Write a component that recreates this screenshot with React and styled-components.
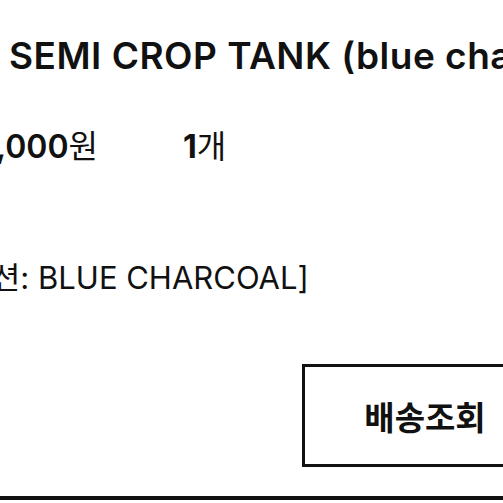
import styled, { createGlobalStyle } from "styled-components";

const GlobalStyle = createGlobalStyle`
  html, body {
    margin: 0;
    padding: 0;
    background: #ffffff;
    overflow: hidden;
  }
  body {
    font-family: Inter, "Noto Sans CJK KR", sans-serif;
    color: #111111;
  }
`;

const Page = styled.div`
  width: 503px;
  height: 503px;
  overflow: hidden;
  display: flex;
  flex-direction: column;
`;

const Title = styled.h1`
  margin: 37px 0 0 9px;
  font-size: 37px;
  line-height: 1;
  font-weight: 600;
  letter-spacing: 0.5px;
  white-space: nowrap;
`;

const InfoRow = styled.div`
  display: flex;
  align-items: baseline;
  margin: 57px 0 0 -44px;
  font-size: 32px;
  line-height: 1;
  white-space: nowrap;
`;

const Price = styled.span`
  width: 227px;
  font-weight: 600;

  & > span {
    font-weight: 400;
  }
`;

const Qty = styled.span`
  font-weight: 700;

  & > span {
    font-weight: 400;
  }
`;

const Option = styled.div`
  margin: 99px 0 0 -48px;
  font-size: 31px;
  line-height: 1;
  font-weight: 400;
  white-space: nowrap;
`;

const Actions = styled.div`
  display: flex;
  margin: 71px 0 0 302px;
`;

const TrackButton = styled.button`
  flex: none;
  width: 246px;
  height: 103px;
  border: 3px solid #111111;
  background: #ffffff;
  font-family: Inter, "Noto Sans CJK KR", sans-serif;
  font-size: 33px;
  font-weight: 700;
  color: #111111;
  padding: 0;
`;

const Divider = styled.div`
  margin-top: 29px;
  height: 4px;
  background: #111111;
`;

export default function App() {
  return (
    <>
      <GlobalStyle />
      <Page>
        <Title>SEMI CROP TANK (blue charcoal)</Title>
        <InfoRow>
          <Price>
            39,000<span>원</span>
          </Price>
          <Qty>
            1<span>개</span>
          </Qty>
        </InfoRow>
        <Option>[옵션: BLUE CHARCOAL]</Option>
        <Actions>
          <TrackButton>배송조회</TrackButton>
        </Actions>
        <Divider />
      </Page>
    </>
  );
}
